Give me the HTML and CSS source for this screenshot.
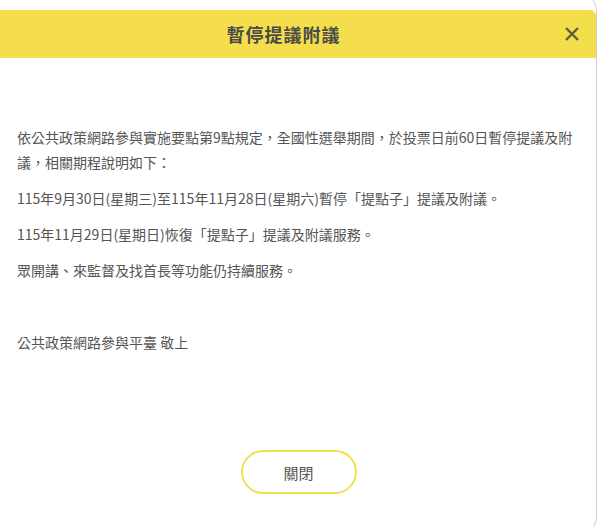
FILE: index.html
```html
<!DOCTYPE html>
<html lang="zh-Hant">
<head>
<meta charset="utf-8">
<link rel="stylesheet" href="styles.css">
</head>
<body>
<div class="modal">
  <div class="modal-header">
    <h2 class="modal-title">暫停提議附議</h2>
    <button class="modal-close" aria-label="close">
      <svg width="16" height="16" viewBox="0 0 16 16"><path d="M2 2L14 14M14 2L2 14" stroke="#5e5e3c" stroke-width="2.4" stroke-linecap="butt"/></svg>
    </button>
  </div>
  <div class="modal-body">
    <p>依公共政策網路參與實施要點第9點規定，全國性選舉期間，於投票日前60日暫停提議及附議，相關期程說明如下：</p>
    <p>115年9月30日(星期三)至115年11月28日(星期六)暫停「提點子」提議及附議。</p>
    <p>115年11月29日(星期日)恢復「提點子」提議及附議服務。</p>
    <p>眾開講、來監督及找首長等功能仍持續服務。</p>
    <p class="blank">&nbsp;</p>
    <p>公共政策網路參與平臺 敬上</p>
  </div>
  <div class="modal-footer">
    <button class="btn-close">關閉</button>
  </div>
</div>
</body>
</html>
```
FILE: styles.css
```css
html, body {
  margin: 0;
  padding: 0;
  background: #fff;
  overflow: hidden;
}
body {
  width: 599px;
  height: 527px;
  font-family: "Noto Sans CJK TC", "Noto Sans", sans-serif;
}
.modal {
  box-sizing: border-box;
  margin: -12px 0 0 -6px;
  width: 603px;
  height: 552px;
  border: 1px solid #cfcfcf;
  border-radius: 24px;
  padding-top: 21px;
  background: #fff;
  display: flex;
  flex-direction: column;
}
.modal-header {
  height: 48px;
  background: #f5de4c;
  border-radius: 6px 6px 0 0;
  display: flex;
  align-items: center;
  padding: 0 12px 0 12px;
}
.modal-title {
  flex: 1;
  margin: 0;
  text-align: center;
  font-size: 18px;
  font-weight: 700;
  letter-spacing: 1px;
  color: #4a4a4a;
}
.modal-close {
  border: 0;
  background: none;
  padding: 0;
  width: 24px;
  height: 24px;
  display: flex;
  align-items: center;
  justify-content: center;
}
.modal-body {
  padding: 67px 22px 0 22px;
  color: #555;
  font-size: 14px;
  line-height: 25px;
}
.modal-body p {
  margin: 0 0 11px 0;
}
.modal-footer {
  display: flex;
  justify-content: center;
  padding-left: 6px;
  margin-top: 84px;
}
.btn-close {
  width: 116px;
  height: 44px;
  border: 2px solid #f5dd4b;
  border-radius: 22px;
  background: #fff;
  font-family: "Noto Sans CJK TC", sans-serif;
  font-size: 15px;
  color: #555;
}
```
